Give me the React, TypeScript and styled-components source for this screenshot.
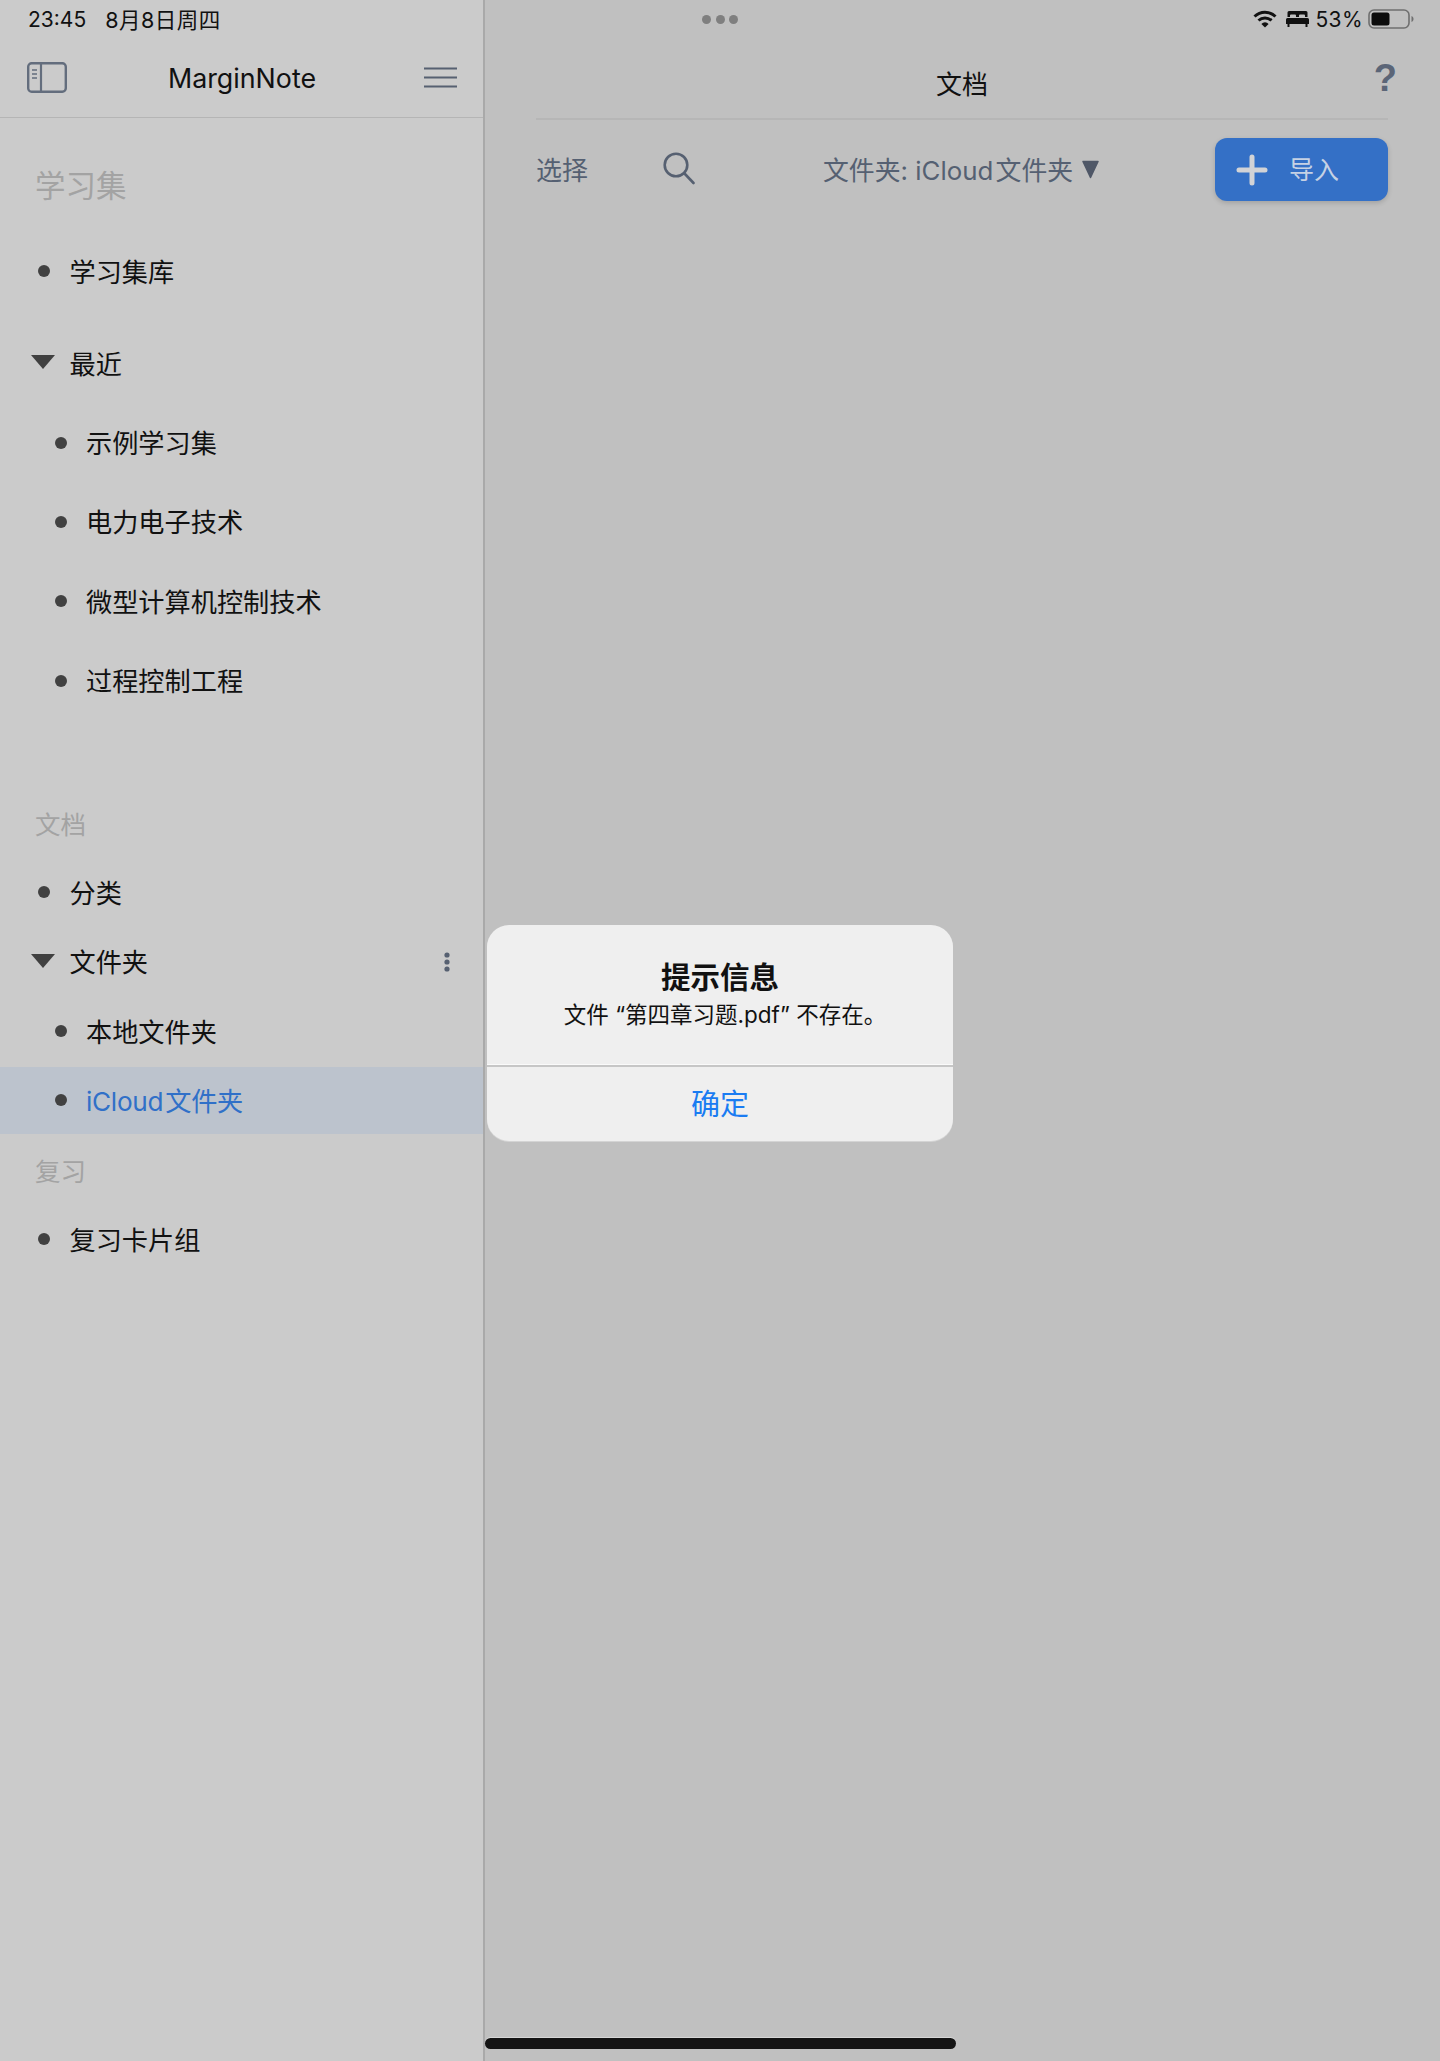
import React from "react";
import styled, { createGlobalStyle } from "styled-components";

const Global = createGlobalStyle`
  html, body { margin: 0; padding: 0; background: #c0c0c0; }
  body { font-family: Inter, "Noto Sans CJK SC", sans-serif; }
  * { box-sizing: border-box; }
`;

const Screen = styled.div`
  position: relative;
  width: 1440px;
  height: 2061px;
  overflow: hidden;
  display: grid;
  grid-template-columns: 485px 1fr;
  background: #c0c0c0;
`;

const Sidebar = styled.aside`
  background: #cbcbcb;
  border-right: 2px solid #a9a9a9;
`;

const StatusLeft = styled.div`
  height: 38px;
  padding-left: 28px;
  display: flex;
  align-items: center;
  gap: 19px;
  font-size: 21px;
  color: #111;
`;

const StatusDate = styled.span`
  font-size: 21.500px;
  letter-spacing: 0.5px;
  padding-bottom: 1px;
`;

const SideHeader = styled.header`
  height: 80px;
  padding: 0 26px 0 27px;
  display: grid;
  grid-template-columns: 1fr auto 1fr;
  align-items: center;
  border-bottom: 1px solid #b5b5b5;
`;

const AppTitle = styled.div`
  font-size: 26.800px;
  color: #111;
  padding-top: 1px;
`;

const EndIcon = styled.div`
  display: flex;
  justify-content: flex-end;
`;

const Nav = styled.nav`
  padding-top: 27px;
`;

const BigHeading = styled.h2`
  margin: 0 0 6px;
  height: 80px;
  padding: 0 0 2px 35px;
  display: flex;
  align-items: center;
  font-size: 30.500px;
  font-weight: 400;
  color: #a3a3a3;
`;

const Heading = styled.h3`
  margin: 0;
  height: 69.4px;
  padding: 0 0 1px 35px;
  display: flex;
  align-items: center;
  font-size: 25.500px;
  font-weight: 400;
  color: #a3a3a3;
`;

const Row = styled.div<{ $h: number; $level?: number; $top?: number; $active?: boolean }>`
  height: ${(p) => (p.$active ? p.$h - 2.4 : p.$h)}px;
  margin-top: ${(p) => (p.$active ? 1 : p.$top || 0)}px;
  margin-bottom: ${(p) => (p.$active ? 1.4 : 0)}px;
  padding-left: ${(p) => (p.$level ? 54.5 : 38)}px;
  padding-right: 32px;
  display: flex;
  align-items: center;
  font-size: 26.200px;
  letter-spacing: ${(p) => (p.$active ? "-0.3px" : "0")};
  color: ${(p) => (p.$active ? "#3070c8" : "#111")};
  background: ${(p) => (p.$active ? "#bcc3cd" : "transparent")};
`;

const Marker = styled.span`
  width: 31.500px;
  flex: none;
  display: flex;
`;

const Bullet = styled.span`
  width: 12px;
  height: 12px;
  border-radius: 50%;
  background: #414141;
`;

const Disclosure = styled.svg`
  margin-left: -7px;
  margin-top: -2px;
`;

const RowLabel = styled.span`
  flex: 1;
  padding-bottom: 1px;
`;

const Spacer = styled.div<{ $h: number }>`
  height: ${(p) => p.$h}px;
`;

const Main = styled.main`
  padding-right: 52px;
`;

const StatusRight = styled.div`
  height: 38px;
  display: flex;
  justify-content: flex-end;
  align-items: center;
  margin-right: -26px;
  font-size: 21px;
  color: #111;
`;

const BedIcon = styled.svg`
  margin-left: 9px;
`;

const StatusPct = styled.span`
  margin: 0 5px 0 6px;
  letter-spacing: 0.4px;
`;

const MainBody = styled.div`
  padding-left: 51px;
`;

const MainHeader = styled.header`
  height: 82px;
  display: grid;
  grid-template-columns: 1fr auto 1fr;
  align-items: center;
  border-bottom: 2px solid #b6b6b6;
`;

const MainTitle = styled.div`
  font-size: 26px;
  color: #111;
  padding-top: 8px;
`;

const Help = styled.div`
  justify-self: end;
  margin-right: -9px;
  margin-top: 0;
  font-family: "Liberation Sans", sans-serif;
  font-weight: 700;
  font-size: 38px;
  line-height: 1;
  color: #5b6577;
`;

const Toolbar = styled.div`
  margin-top: 18px;
  height: 63px;
  display: grid;
  grid-template-columns: 127px 160px 1fr 173px;
  align-items: center;
  font-size: 26px;
  color: #556072;
`;

const ToolLabel = styled.span`
  padding-bottom: 3px;
`;

const SearchIcon = styled.svg`
  margin-top: -3px;
`;

const FolderPicker = styled.div`
  display: flex;
  align-items: center;
  gap: 8px;
  font-size: 25.850px;
`;

const FolderText = styled.span`
  padding-bottom: 3px;
`;

const ImportButton = styled.button`
  height: 63px;
  border: 0;
  border-radius: 12px;
  padding: 0 0 3px 21px;
  display: flex;
  align-items: center;
  gap: 21px;
  font: inherit;
  font-size: 25px;
  color: #c6d2e4;
  background: #3470c6;
  box-shadow: 0 2px 5px rgba(0, 0, 0, 0.16);
`;

const PlusIcon = styled.svg`
  margin-top: 3px;
`;

const Dots = styled.div`
  position: absolute;
  top: 15px;
  left: 702px;
  display: flex;
  gap: 4.500px;
`;

const Dot = styled.span`
  width: 9px;
  height: 9px;
  border-radius: 50%;
  background: #7f7f7f;
`;

const Alert = styled.div`
  position: absolute;
  left: 487px;
  top: 925px;
  width: 466px;
  height: 216px;
  border-radius: 22px;
  background: #efefef;
  box-shadow: 0 1px 0 #d4d4d4;
  display: flex;
  flex-direction: column;
`;

const AlertBody = styled.div`
  height: 139px;
  padding-top: 32px;
  text-align: center;
  color: #111;
`;

const AlertTitle = styled.div`
  font-size: 29.500px;
  font-weight: 700;
  line-height: 40px;
`;

const AlertText = styled.div`
  padding-left: 10px;
  font-size: 22.500px;
  line-height: 36px;
`;

const AlertAction = styled.div`
  flex: 1;
  border-top: 1px solid #fafafa;
  display: flex;
  flex-direction: column;
  font-size: 29px;
  color: #1a7cf2;
`;

const AlertButton = styled.div`
  flex: 1;
  border-top: 2px solid #c6c6c6;
  padding-bottom: 5px;
  display: flex;
  align-items: center;
  justify-content: center;
`;

const HomeBar = styled.div`
  position: absolute;
  left: 485px;
  top: 2038px;
  width: 471px;
  height: 11px;
  border-radius: 6px;
  background: #141414;
  box-shadow: 0 -1px 0 #d6d6d6;
`;

const Item = ({ label, level, h, top, active, open, extra }: {
  label: string; level?: number; h: number; top?: number; active?: boolean; open?: boolean; extra?: React.ReactNode;
}) => (
  <Row $h={h} $level={level} $top={top} $active={active}>
    <Marker>
      {open ? (
        <Disclosure width="24" height="14" viewBox="0 0 24 14"><path d="M0 0h24L12 14z" fill="#404040" /></Disclosure>
      ) : (
        <Bullet />
      )}
    </Marker>
    <RowLabel>{label}</RowLabel>
    {extra}
  </Row>
);

export default function App() {
  return (
    <Screen>
      <Global />
      <Sidebar>
        <StatusLeft>
          <span>23:45</span>
          <StatusDate>8月8日周四</StatusDate>
        </StatusLeft>
        <SideHeader>
          <svg width="40" height="31" viewBox="0 0 40 31" fill="none" stroke="#636d7d">
            <rect x="1.2" y="1.2" width="37.6" height="28.6" rx="3.5" strokeWidth="2.4" />
            <path d="M14 1v29" strokeWidth="2.2" />
            <path d="M5 8h5M5 12h5M5 16h5" strokeWidth="1.6" />
          </svg>
          <AppTitle>MarginNote</AppTitle>
          <EndIcon>
            <svg width="33" height="21" viewBox="0 0 33 21" stroke="#566071" strokeWidth="2">
              <path d="M0 1.500h33M0 10.500h33M0 19.500h33" />
            </svg>
          </EndIcon>
        </SideHeader>
        <Nav>
          <BigHeading>学习集</BigHeading>
          <Item label="学习集库" h={80} />
          <Item label="最近" h={80} top={12} open />
          <Item label="示例学习集" h={79.33} level={1} />
          <Item label="电力电子技术" h={79.33} level={1} />
          <Item label="微型计算机控制技术" h={79.33} level={1} />
          <Item label="过程控制工程" h={79.33} level={1} />
          <Spacer $h={68} />
          <Heading>文档</Heading>
          <Item label="分类" h={69.4} />
          <Item
            label="文件夹"
            h={69.4}
            open
            extra={
              <svg width="8" height="20" viewBox="0 0 8 20" fill="#566071">
                <circle cx="4" cy="3" r="2.600" />
                <circle cx="4" cy="10" r="2.600" />
                <circle cx="4" cy="17" r="2.600" />
              </svg>
            }
          />
          <Item label="本地文件夹" h={69.4} level={1} />
          <Item label={"iCloud\u200A文件夹"} h={69.4} level={1} active />
          <Heading>复习</Heading>
          <Item label="复习卡片组" h={69} />
        </Nav>
      </Sidebar>
      <Main>
        <StatusRight>
          <svg width="24" height="18" viewBox="0 0 24 18" fill="none" stroke="#111" strokeWidth="3">
            <path d="M1.500 6.500a15 15 0 0 1 21 0" />
            <path d="M5.500 10.500a9.500 9.500 0 0 1 13 0" />
            <path d="M12 17.500l-3.600-3.600a5 5 0 0 1 7.200 0z" fill="#111" stroke="none" />
          </svg>
          <BedIcon width="23" height="16" viewBox="0 0 23 16" fill="#111">
            <path d="M3 0h17a1.500 1.500 0 0 1 1.500 1.500V6h-2.500V4.500a1 1 0 0 0-1-1h-4a1 1 0 0 0-1 1V6h-3V4.500a1 1 0 0 0-1-1H5a1 1 0 0 0-1 1V6H1.500V1.500A1.500 1.500 0 0 1 3 0z" />
            <path d="M1.500 7h20A1.500 1.500 0 0 1 23 8.500V13h-1.500v3h-2v-3h-16v3h-2v-3H0V8.500A1.500 1.500 0 0 1 1.500 7z" />
          </BedIcon>
          <StatusPct>53%</StatusPct>
          <svg width="46" height="20" viewBox="0 0 46 20" fill="none">
            <rect x="1" y="1" width="40" height="18" rx="5" stroke="#6f6f6f" strokeWidth="1.600" />
            <rect x="3.500" y="3.500" width="18" height="13" rx="2.500" fill="#0c0c0c" />
            <path d="M43.500 7v6c1.300-.5 2-1.600 2-3s-.7-2.500-2-3z" fill="#6f6f6f" />
          </svg>
        </StatusRight>
        <MainBody>
          <MainHeader>
            <span />
            <MainTitle>文档</MainTitle>
            <Help>?</Help>
          </MainHeader>
          <Toolbar>
            <ToolLabel>选择</ToolLabel>
            <SearchIcon width="32" height="33" viewBox="0 0 32 33" fill="none" stroke="#566071" strokeWidth="2.600" strokeLinecap="round">
              <circle cx="13" cy="13" r="11.300" />
              <path d="M21.500 21.500L30.500 31" />
            </SearchIcon>
            <FolderPicker>
              <FolderText>{"文件夹: iCloud\u200A文件夹"}</FolderText>
              <svg width="19" height="19" viewBox="0 0 19 19">
                <path d="M2 1.500h15L9.500 17.500z" fill="#4f5767" stroke="#4f5767" strokeWidth="1.500" strokeLinejoin="round" />
              </svg>
            </FolderPicker>
            <ImportButton>
              <PlusIcon width="32" height="32" viewBox="0 0 32 32" stroke="#d2d3d6" strokeWidth="5" strokeLinecap="round">
                <path d="M16 3v26M3 16h26" />
              </PlusIcon>
              导入
            </ImportButton>
          </Toolbar>
        </MainBody>
      </Main>
      <Dots>
        <Dot />
        <Dot />
        <Dot />
      </Dots>
      <Alert>
        <AlertBody>
          <AlertTitle>提示信息</AlertTitle>
          <AlertText>文件 “第四章习题.pdf” 不存在。</AlertText>
        </AlertBody>
        <AlertAction>
          <AlertButton>确定</AlertButton>
        </AlertAction>
      </Alert>
      <HomeBar />
    </Screen>
  );
}
